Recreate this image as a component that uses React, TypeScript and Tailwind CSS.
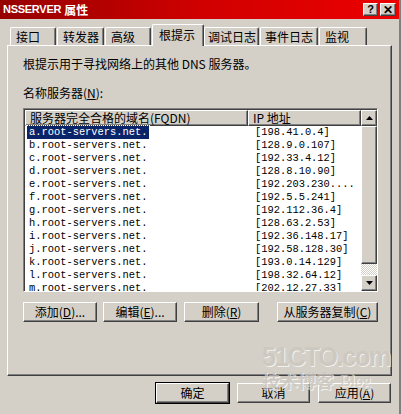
import React from "react";

const raised =
  "border border-t-white border-l-white border-r-[#404040] border-b-[#404040] shadow-[inset_-1px_-1px_0_#808080]";

const tabs = [
  { t: "接口", w: 46, ml: 0, pl: 5 },
  { t: "转发器", w: 47, ml: 1, pl: 5 },
  { t: "高级", w: 46, ml: 1, pl: 5 },
  { t: "根提示", w: 52, ml: 1, pl: 6, sel: true },
  { t: "调试日志", w: 55, ml: 0, pl: 3 },
  { t: "事件日志", w: 58, ml: 1, pl: 4 },
  { t: "监视", w: 48, ml: 1, pl: 5 },
];

const rows = [
  ["a.root-servers.net.", "[198.41.0.4]"],
  ["b.root-servers.net.", "[128.9.0.107]"],
  ["c.root-servers.net.", "[192.33.4.12]"],
  ["d.root-servers.net.", "[128.8.10.90]"],
  ["e.root-servers.net.", "[192.203.230...."],
  ["f.root-servers.net.", "[192.5.5.241]"],
  ["g.root-servers.net.", "[192.112.36.4]"],
  ["h.root-servers.net.", "[128.63.2.53]"],
  ["i.root-servers.net.", "[192.36.148.17]"],
  ["j.root-servers.net.", "[192.58.128.30]"],
  ["k.root-servers.net.", "[193.0.14.129]"],
  ["l.root-servers.net.", "[198.32.64.12]"],
  ["m.root-servers.net.", "[202.12.27.33]"],
];

const Btn = ({ children, className = "" }: { children: React.ReactNode; className?: string }) => (
  <div className={`${raised} h-[20px] flex items-center justify-center text-[12px] leading-none text-black ${className}`}>
    {children}
  </div>
);

export default function App() {
  return (
    <div className="w-[401px] h-[414px] bg-[#d4d0c8] relative overflow-hidden font-['Noto_Sans_CJK_SC',sans-serif] text-black border-r-2 border-[#808080]">
      {/* title bar */}
      <div className="h-[19px] bg-linear-to-r from-[#960000] via-[#d00000] to-[#ec0000] flex items-center pl-[3px] pr-[3px]">
        <span className="text-white font-bold text-[11px] font-['Liberation_Sans',sans-serif] tracking-tight">NSSERVER</span>
        <span className="text-white font-bold text-[12px] ml-[3px]">属性</span>
        <div className="ml-auto flex gap-[2px]">
          <div className={`${raised} bg-[#d4d0c8] w-[15px] h-[13px] flex items-center justify-center text-[11px] font-bold font-['Liberation_Sans',sans-serif] leading-none`}>?</div>
          <div className={`${raised} bg-[#d4d0c8] w-[16px] h-[13px] flex items-center justify-center text-[12px] font-bold font-['Liberation_Sans',sans-serif] leading-none`}>✕</div>
        </div>
      </div>

      {/* tabs */}
      <div className="h-[26px] flex items-end pl-[10px]">
        {tabs.map((t) =>
          t.sel ? (
            <div
              key={t.t}
              style={{ width: t.w, marginLeft: t.ml, paddingLeft: t.pl }}
              className="relative z-10 -mb-[1px] h-[22px] bg-[#d4d0c8] border-t border-l border-white border-r border-r-[#404040] shadow-[inset_-1px_0_0_#808080] rounded-t-[2px] pt-[3px] text-[12px] leading-[14px] whitespace-nowrap"
            >
              {t.t}
            </div>
          ) : (
            <div
              key={t.t}
              style={{ width: t.w, marginLeft: t.ml, paddingLeft: t.pl }}
              className="h-[18px] border-t border-l border-white border-r border-r-[#404040] shadow-[inset_-1px_0_0_#808080] rounded-t-[2px] pt-[2px] text-[12px] leading-[14px] whitespace-nowrap overflow-hidden"
            >
              {t.t}
            </div>
          )
        )}
      </div>

      {/* panel */}
      <div className={`${raised} mx-[7px] h-[331px] flex flex-col pl-[15px] pr-[13px]`}>
        <p className="mt-[11px] h-[14px] text-[12px] leading-[14px]">根提示用于寻找网络上的其他 DNS 服务器。</p>
        <p className="mt-[15px] h-[14px] text-[12px] leading-[14px]">
          名称服务器(<u>N</u>):
        </p>

        {/* list */}
        <div className="mt-[8px] h-[184px] flex border border-t-[#808080] border-l-[#808080] border-r-white border-b-white shadow-[inset_1px_1px_0_#404040] p-[1px] pr-0 pb-0">
          <div className="flex-1 bg-white overflow-hidden flex flex-col">
            <div className="h-[16px] flex shrink-0 bg-[#d4d0c8]">
              <div className={`${raised} w-[223px] pl-[4px] text-[12px] leading-[14px]`}>服务器完全合格的域名(FQDN)</div>
              <div className={`${raised} flex-1 pl-[4px] text-[12px] leading-[14px]`}>IP 地址</div>
            </div>
            {rows.map(([n, ip], i) => (
              <div key={n} className="h-[13px] shrink-0 flex font-['Liberation_Mono',monospace] text-[10.4px] leading-[13px]">
                <div className="w-[223px] pl-[2px]">
                  <span className={i === 0 ? "bg-[#0a246a] text-white px-[2px] inline-block h-[13px] outline-1 outline-dotted outline-[#fff]" : "px-[2px]"}>{n}</span>
                </div>
                <div className="pl-[7px]">{ip}</div>
              </div>
            ))}
          </div>
          {/* scrollbar */}
          <div className="w-[16px] flex flex-col">
            <div className={`${raised} h-[16px] bg-[#d4d0c8] flex items-center justify-center`}>
              <svg width="7" height="4" viewBox="0 0 7 4"><path d="M3.5 0L7 4H0z" fill="#000" /></svg>
            </div>
            <div className={`${raised} flex-1 bg-[#d4d0c8]`} />
            <div className="h-[11px] bg-[repeating-conic-gradient(#fff_0_25%,#d4d0c8_0_50%)] bg-[length:2px_2px]" />
            <div className={`${raised} h-[16px] bg-[#d4d0c8] flex items-center justify-center`}>
              <svg width="7" height="4" viewBox="0 0 7 4"><path d="M0 0H7L3.5 4z" fill="#000" /></svg>
            </div>
          </div>
        </div>

        {/* list buttons */}
        <div className="mt-[10px] flex">
          <Btn className="w-[74px]">添加(<u>D</u>)...</Btn>
          <Btn className="w-[74px] ml-[6px]">编辑(<u>E</u>)...</Btn>
          <Btn className="w-[75px] ml-[7px]">删除(<u>R</u>)</Btn>
          <Btn className="w-[101px] ml-auto">从服务器复制(<u>C</u>)</Btn>
        </div>
      </div>

      {/* dialog buttons */}
      <div className="mt-[7px] flex justify-end gap-[8px] pr-[8px]">
        <Btn className="w-[73px] outline outline-1 outline-black">确定</Btn>
        <Btn className="w-[73px]">取消</Btn>
        <Btn className="w-[73px]">
          应用(<u>A</u>)
        </Btn>
      </div>

      {/* watermark */}
      <div className="absolute left-[262px] top-[342px] pointer-events-none select-none text-[#cbc7bf] opacity-70 [text-shadow:1px_1px_0_#fff]">
        <div className="font-['Liberation_Sans',sans-serif] font-bold text-[28px] leading-[30px] tracking-tighter scale-x-90 origin-left">51CTO.com</div>
        <div className="flex items-end gap-[6px] -mt-[2px]">
          <span className="text-[18px] leading-[20px] font-bold">技术博客</span>
          <span className="font-['Liberation_Serif',serif] text-[16px] leading-[18px]">Blog</span>
        </div>
      </div>
    </div>
  );
}
